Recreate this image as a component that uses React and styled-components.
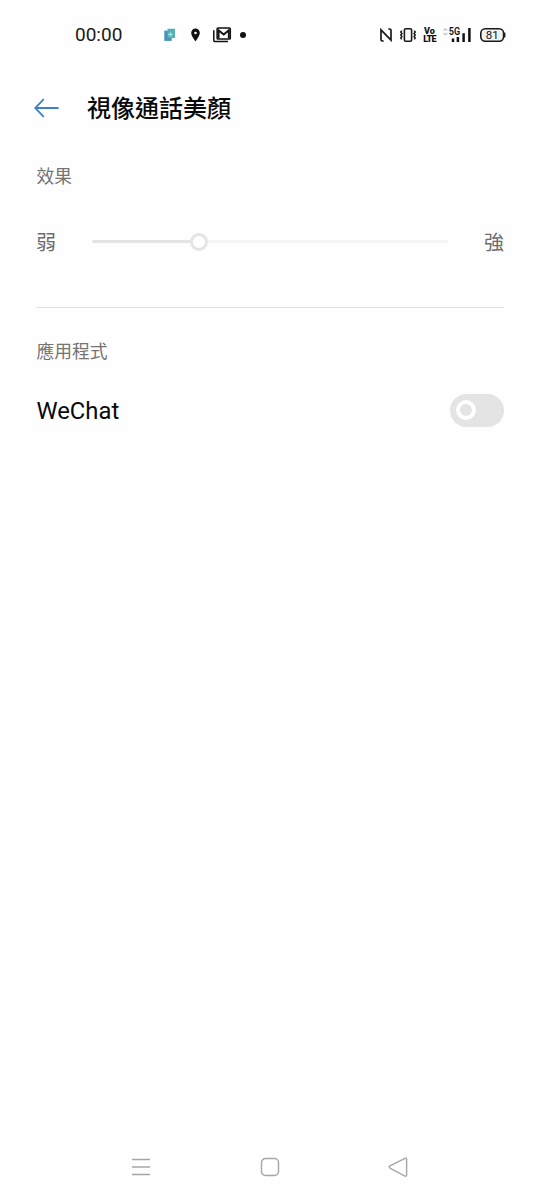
import React, { useState } from 'react';
import styled, { createGlobalStyle } from 'styled-components';

const GlobalStyle = createGlobalStyle`
    * {
        box-sizing: border-box;
    }
    body {
        margin: 0;
        background: #fefefe;
        font-family: Roboto, "Noto Sans CJK TC", sans-serif;
        color: #0c0c0c;
    }
`;

const Screen = styled.div`
    display: flex;
    flex-direction: column;
    width: 540px;
    height: 1200px;
    background: #fefefe;
`;
const StatusBar = styled.div`
    display: flex;
    justify-content: space-between;
    align-items: center;
    height: 70px;
    padding: 0 34px 0 75px;
`;
const StatusGroup = styled.div`
    display: flex;
    align-items: center;
`;
const Clock = styled.span`
    width: 89px;
    font-size: 19px;
    line-height: 24px;
    color: #1a1a1a;
`;
const StatusIcon = styled.svg`
    display: block;
    flex: none;
    margin-left: ${(props) => props.$gap || 0}px;
    overflow: visible;
`;
const SvgText = styled.text`
    font-family: Roboto, sans-serif;
    font-size: ${(props) => props.$size}px;
    font-weight: ${(props) => props.$weight || 700};
    fill: #111;
`;
const VolteBadge = styled.div`
    display: flex;
    flex-direction: column;
    align-items: center;
    width: 12px;
    margin-left: 8px;
    font-size: 9px;
    line-height: 8px;
    font-weight: 900;
    color: #111;
`;
const VolteLine = styled.span`
    height: 8px;
    letter-spacing: ${(props) => props.$spacing || 0}px;
`;

const Header = styled.header`
    display: flex;
    align-items: center;
    height: 75px;
    padding-left: 34px;
`;
const BackButton = styled.button`
    display: flex;
    padding: 0;
    border: none;
    background: none;
    cursor: pointer;
`;
const Title = styled.h1`
    margin: 0 0 0 28px;
    padding-top: 2px;
    font-size: 24px;
    line-height: 36px;
    font-weight: 500;
    color: #0a0a0a;
`;

const Section = styled.section`
    margin: 0 36px;
`;
const SectionLabel = styled.h2`
    margin: 0;
    padding-left: 0.5px;
    font-size: 17.8px;
    line-height: 26px;
    font-weight: 400;
    color: #747474;
`;
const EffectSection = styled(Section)`
    height: 163px;
    padding-top: 19px;
    border-bottom: 1px solid #e0e0e0;
`;
const AppSection = styled(Section)`
    flex: 1;
    padding-top: 31px;
`;

const SliderRow = styled.div`
    display: flex;
    align-items: center;
    justify-content: space-between;
    height: 33px;
    margin-top: 35px;
`;
const SliderText = styled.span`
    padding-top: 3px;
    font-size: 20px;
    line-height: 30px;
    color: #6c6c6c;
`;
const Track = styled.div`
    display: flex;
    align-items: center;
    width: 356px;
`;
const TrackFill = styled.div`
    height: 3px;
    background: #e4e4e4;
    border-radius: 2px 0 0 2px;
`;
const TrackRest = styled.div`
    flex: 1;
    height: 3px;
    background: #f5f5f5;
    border-radius: 0 2px 2px 0;
`;
const Thumb = styled.div`
    flex: none;
    width: 18px;
    height: 18px;
    margin: -1px 0;
    border: 3px solid #e4e4e4;
    border-radius: 50%;
    background: #fff;
`;

const AppRow = styled.div`
    display: flex;
    align-items: center;
    justify-content: space-between;
    height: 34px;
    margin-top: 28px;
`;
const AppName = styled.span`
    padding: 2px 0 0 0.5px;
    font-size: 23.8px;
    line-height: 34px;
    color: #0a0a0a;
`;
const Switch = styled.button`
    display: flex;
    align-items: center;
    justify-content: ${(props) => (props.$on ? 'flex-end' : 'flex-start')};
    width: 54px;
    height: 33px;
    padding: 0 6px;
    border: none;
    border-radius: 17px;
    background: ${(props) => (props.$on ? '#2f7bd0' : '#e4e4e4')};
    cursor: pointer;
`;
const SwitchKnob = styled.span`
    width: 20px;
    height: 20px;
    border: 4px solid #fff;
    border-radius: 50%;
`;

const NavBar = styled.nav`
    display: flex;
    justify-content: space-between;
    align-items: center;
    height: 66px;
    padding: 0 132px 0 131px;
`;
const NavIcon = styled.svg`
    display: block;
    width: 20px;
    height: 20px;
    fill: none;
    stroke: #a6a6a6;
    stroke-width: 1.4;
    overflow: visible;
`;

const StatusLeft = () => (
    <StatusGroup>
        <Clock>00:00</Clock>
        <StatusIcon width="11" height="14" viewBox="0 0 11 14">
            <path d="M3.5 0.8 H11 V10 H7.5 V12.8 H0.5 V2.8 H3.5 Z" fill="#50b1b8" />
            <path d="M0.5 2.8 H3.5 V10 H7.5 V12.8 H0.5 Z" fill="#4b91bd" />
            <path d="M4 5.5 H6 V3.8 L9 6.4 L6 9 V7.3 H4 Z" fill="#9adccf" />
        </StatusIcon>
        <StatusIcon $gap={16} width="9" height="14" viewBox="0 0 9 14">
            <path
                fillRule="evenodd"
                fill="#111"
                d="M4.5 0.6 A4.3 4.3 0 0 0 0.2 4.9 C0.2 8 4.5 13.3 4.5 13.3 S8.8 8 8.8 4.9 A4.3 4.3 0 0 0 4.5 0.6 Z M4.5 3.7 A1.3 1.3 0 1 1 4.5 6.3 A1.3 1.3 0 1 1 4.5 3.7 Z"
            />
        </StatusIcon>
        <StatusIcon $gap={13} width="18" height="16" viewBox="0 0 18 16">
            <path d="M0.8 3.2 V13.4 Q0.8 14.5 1.9 14.5 H15" fill="none" stroke="#111" strokeWidth="1.5" />
            <rect x="4.1" y="1.1" width="13.2" height="11" rx="0.9" fill="none" stroke="#111" strokeWidth="1.5" />
            <path d="M5.6 11.6 V3.2 L10.7 7.4 L15.8 3.2 V11.6" fill="none" stroke="#111" strokeWidth="1.9" />
        </StatusIcon>
        <StatusIcon $gap={9} width="6" height="6" viewBox="0 0 6 6">
            <circle cx="3" cy="3" r="3" fill="#111" />
        </StatusIcon>
    </StatusGroup>
);

const StatusRight = () => (
    <StatusGroup>
        <StatusIcon width="12" height="14" viewBox="0 0 12 14">
            <path
                d="M3.6 12.9 Q1 13.4 1 11.4 V1.8 L11 12.2 V2.6 Q11 0.6 8.4 1.1"
                fill="none"
                stroke="#1a1a1a"
                strokeWidth="1.7"
            />
        </StatusIcon>
        <StatusIcon $gap={7.5} width="16" height="14" viewBox="0 0 16 14">
            <rect x="4.4" y="0.8" width="7.2" height="12.4" rx="1.2" fill="none" stroke="#1a1a1a" strokeWidth="1.6" />
            <path
                d="M1.7 2.6 L0.8 4 L1.9 5.5 L0.8 7 L1.9 8.5 L0.8 10 L1.7 11.4 M14.3 2.6 L15.2 4 L14.1 5.5 L15.2 7 L14.1 8.5 L15.2 10 L14.3 11.4"
                fill="none"
                stroke="#1a1a1a"
                strokeWidth="1.5"
            />
        </StatusIcon>
        <VolteBadge>
            <VolteLine>Vo</VolteLine>
            <VolteLine $spacing={-0.8}>LTE</VolteLine>
        </VolteBadge>
        <StatusIcon $gap={7.5} width="28" height="16" viewBox="0 0 28 16">
            <path d="M0.6 3.6 L2.4 1.8 L4.2 3.6 M0.6 6 L2.4 7.8 L4.2 6" fill="none" stroke="#bdbdbd" strokeWidth="1.1" />
            <SvgText $size={10} $weight={600} x="5.8" y="8" textLength="11.4" lengthAdjust="spacingAndGlyphs">5G</SvgText>
            <path d="M10 11.4 V15 M14.9 10 V15 M20.6 6.2 V15 M26.4 1 V15" fill="none" stroke="#111" strokeWidth="2.5" />
        </StatusIcon>
        <StatusIcon $gap={9} width="26" height="14" viewBox="0 0 26 14">
            <rect x="0.8" y="0.8" width="22.8" height="12.4" rx="4.4" fill="#f1f1f1" stroke="#1a1a1a" strokeWidth="1.6" />
            <path d="M24.6 4.6 V9.4" stroke="#1a1a1a" strokeWidth="1.6" />
            <SvgText $size={11.5} $weight={400} x="12.2" y="11.1" textAnchor="middle">81</SvgText>
        </StatusIcon>
    </StatusGroup>
);

const App = () => {
    const [wechat, setWechat] = useState(false);
    const level = 98;

    return (
        <>
            <GlobalStyle />
            <Screen>
                <StatusBar>
                    <StatusLeft />
                    <StatusRight />
                </StatusBar>
                <Header>
                    <BackButton aria-label="返回">
                        <svg width="25" height="20" viewBox="0 0 25 20" fill="none" stroke="#3f80cc" strokeWidth="1.8">
                            <path d="M9.8 1.2 L1.2 10 L9.8 18.8 M1.2 10 H24.6" />
                        </svg>
                    </BackButton>
                    <Title>視像通話美顏</Title>
                </Header>
                <EffectSection>
                    <SectionLabel>效果</SectionLabel>
                    <SliderRow>
                        <SliderText>弱</SliderText>
                        <Track>
                            <TrackFill style={{ width: level }} />
                            <Thumb />
                            <TrackRest />
                        </Track>
                        <SliderText>強</SliderText>
                    </SliderRow>
                </EffectSection>
                <AppSection>
                    <SectionLabel>應用程式</SectionLabel>
                    <AppRow>
                        <AppName>WeChat</AppName>
                        <Switch $on={wechat} onClick={() => setWechat(!wechat)} aria-label="WeChat">
                            <SwitchKnob />
                        </Switch>
                    </AppRow>
                </AppSection>
                <NavBar>
                    <NavIcon viewBox="0 0 20 20">
                        <path d="M1 2.5 H19 M1 10 H19 M1 17.5 H19" />
                    </NavIcon>
                    <NavIcon viewBox="0 0 20 20">
                        <rect x="1.5" y="1.5" width="17" height="17" rx="4" />
                    </NavIcon>
                    <NavIcon viewBox="0 0 20 20">
                        <path d="M17 1.3 L2 8.8 Q0.4 10 2 11.2 L17 19 Q18.6 19.6 18.6 18 V2.2 Q18.6 0.6 17 1.3 Z" />
                    </NavIcon>
                </NavBar>
            </Screen>
        </>
    );
};

export default App;
